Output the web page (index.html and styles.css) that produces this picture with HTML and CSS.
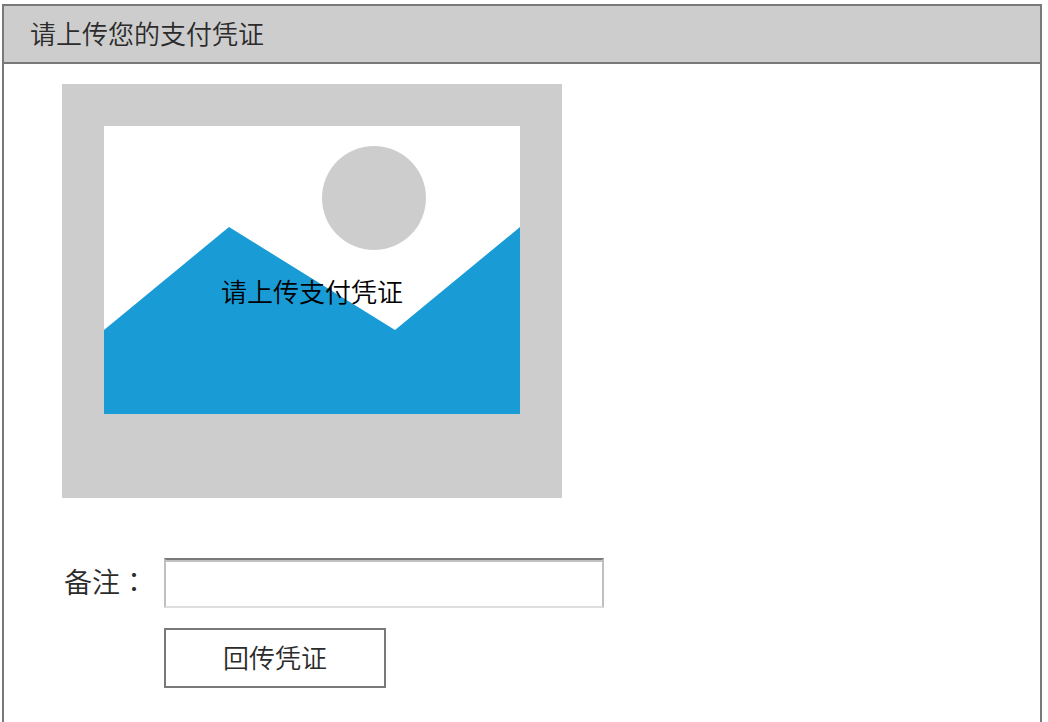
FILE: index.html
```html
<!DOCTYPE html>
<html lang="zh-CN">
<head>
<meta charset="utf-8">
<meta name="viewport" content="width=device-width, initial-scale=1">
<title>请上传您的支付凭证</title>
<link rel="stylesheet" href="styles.css">
</head>
<body>
<main class="panel">
  <header class="panel-header">
    <h1 class="panel-title">请上传您的支付凭证</h1>
  </header>
  <form class="panel-body">
    <div class="preview">
      <svg class="preview-art" viewBox="0 0 500 414" aria-hidden="true">
        <rect width="500" height="414" fill="#cdcdcd"/>
        <rect x="42" y="42" width="416" height="288" fill="#fff"/>
        <circle cx="312" cy="114" r="52" fill="#cdcdcd"/>
        <path d="M42 246 167 143 333 246 458 143V330H42Z" fill="#199bd6"/>
      </svg>
      <span class="preview-caption">请上传支付凭证</span>
    </div>
    <div class="fields">
      <label class="field-label" for="remark">备注<span class="colon" lang="zh-TW">：</span></label>
      <input class="field-input" id="remark" name="remark" type="text">
      <button class="submit" type="button">回传凭证</button>
    </div>
  </form>
</main>
</body>
</html>
```
FILE: styles.css
```css
* {
  box-sizing: border-box;
}

body {
  margin: 0;
  padding: 4px 6px 0 2px;
  background: #fff;
  color: #2b2b2b;
  font-family: "Noto Sans CJK SC", sans-serif;
  font-size: 26px;
  line-height: 40px;
}

.panel {
  min-height: calc(100vh - 4px);
  border: 2px solid #797979;
  border-bottom: 0;
}

.panel-header {
  padding: 7px 26px 9px;
  border-bottom: 2px solid #797979;
  background: #cdcdcd;
}

.panel-title {
  margin: 0;
  font-size: 26px;
  font-weight: 350;
  line-height: 40px;
}

.panel-body {
  display: flex;
  flex-direction: column;
  gap: 60px;
  padding: 20px 58px 32px;
}

.preview {
  display: grid;
  place-items: center;
  width: 100%;
  max-width: 500px;
  color: #000;
}

.preview-art,
.preview-caption {
  grid-area: 1 / 1;
}

.preview-art {
  display: block;
  width: 100%;
}

.preview-caption {
  font-weight: 350;
}

.fields {
  display: grid;
  grid-template-columns: 102px minmax(0, 440px);
  gap: 20px 0;
  align-items: center;
}

.field-label {
  padding: 0 0 4px 2px;
  font-size: 28px;
  font-weight: 350;
  white-space: nowrap;
}

/* The Traditional face centres the full-width colon in its cell. */
.colon {
  font-family: "Noto Sans CJK TC", sans-serif;
}

.field-input {
  width: 100%;
  height: 50px;
  padding: 0 8px;
  border: 2px solid #c0c0c0;
  border-top-color: #797979;
  border-bottom-color: #dedede;
  border-radius: 0;
  background: #fff;
  box-shadow: inset 0 2px #c0c0c0;
  color: inherit;
  font: inherit;
}

.submit {
  grid-column: 2;
  justify-self: start;
  padding: 7px 57px 9px;
  border: 2px solid #797979;
  border-radius: 0;
  background: #fff;
  color: inherit;
  font: inherit;
  font-weight: 350;
}
```
